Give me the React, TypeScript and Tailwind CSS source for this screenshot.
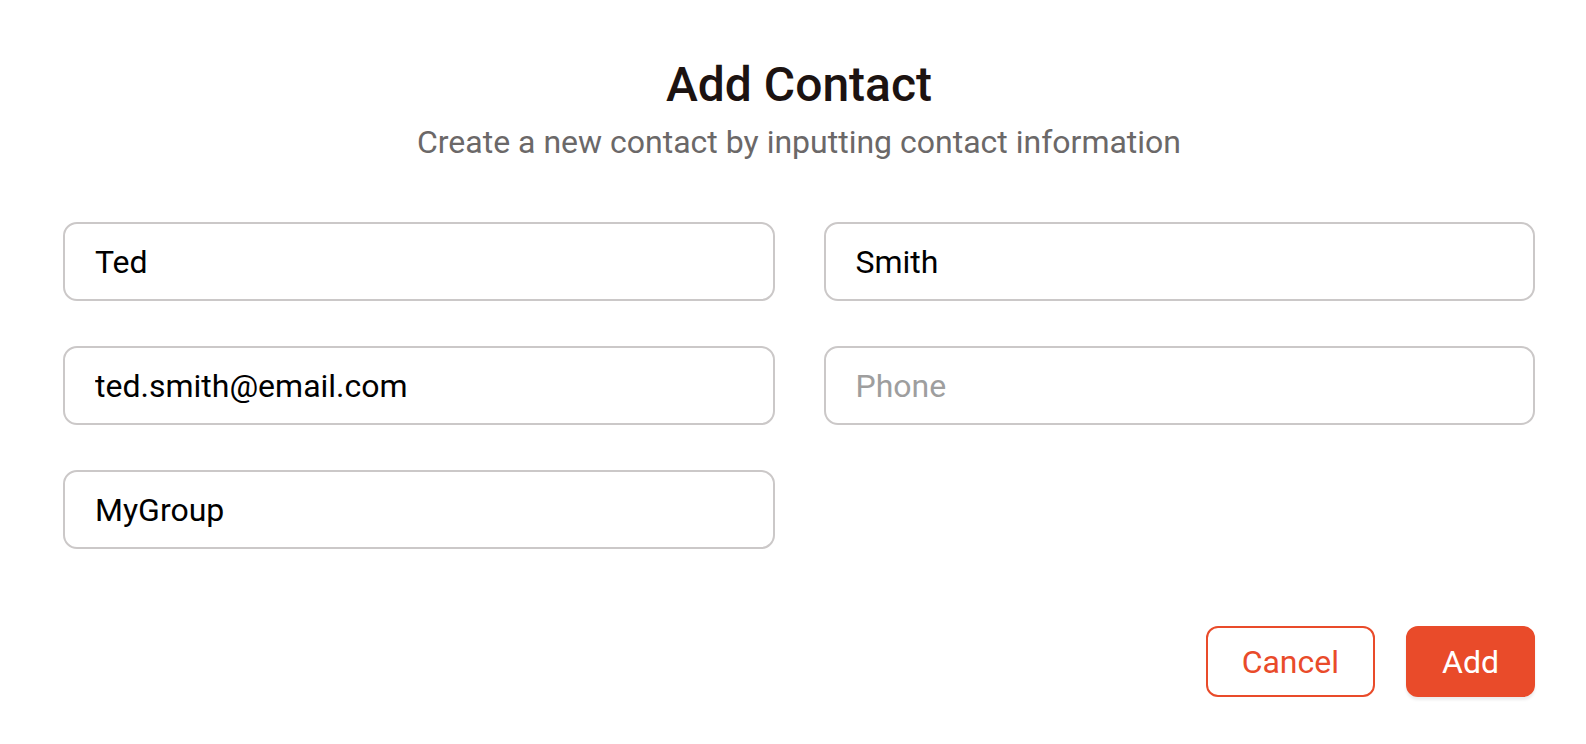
import React from "react";

function Field({ value, placeholder }: { value?: string; placeholder?: string }) {
  return (
    <input
      defaultValue={value}
      placeholder={placeholder}
      className="box-border h-[79px] w-full rounded-[14px] border-2 border-[#cbc8c8] bg-white px-[30px] text-[32px] text-black outline-none placeholder:text-[#9e9e9e]"
      style={{ fontFamily: "Roboto, 'Noto Sans', sans-serif" }}
    />
  );
}

export default function App() {
  return (
    <div
      className="min-h-[744px] w-full bg-white pl-[63px] pr-[51px] pt-[57px]"
      style={{ fontFamily: "Roboto, 'Noto Sans', sans-serif" }}
    >
      <h1 className="text-center text-[48px] font-medium leading-[56px] text-[#1c1311]">Add Contact</h1>
      <p className="mt-[11px] text-center text-[32px] leading-[37px] text-[#6b6868]">
        Create a new contact by inputting contact information
      </p>
      <div className="mt-[61px] grid grid-cols-2 gap-x-[49px] gap-y-[45px]">
        <Field value="Ted" />
        <Field value="Smith" />
        <Field value="ted.smith@email.com" />
        <Field placeholder="Phone" />
        <Field value="MyGroup" />
      </div>
      <div className="mt-[77px] flex justify-end gap-[31px]">
        <button className="box-border h-[71px] rounded-[12px] border-2 border-[#e94b2a] bg-white px-[34px] text-[32px] text-[#e94b2a]">
          Cancel
        </button>
        <button className="box-border h-[71px] rounded-[12px] border-2 border-[#e94b2a] bg-[#e94b2a] px-[34px] text-[32px] text-white shadow-[0_3px_3px_rgba(0,0,0,0.08)]">
          Add
        </button>
      </div>
    </div>
  );
}
